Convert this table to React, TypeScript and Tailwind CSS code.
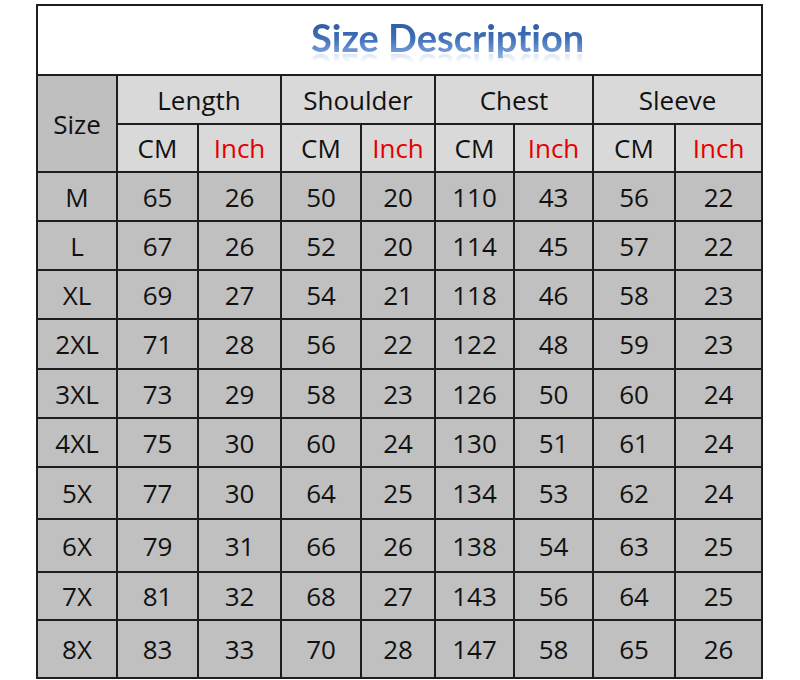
const rows: [string, number, number, number, number, number, number, number, number, string][] = [
  ['M', 65, 26, 50, 20, 110, 43, 56, 22, 'h-[49px]'],
  ['L', 67, 26, 52, 20, 114, 45, 57, 22, 'h-[49px]'],
  ['XL', 69, 27, 54, 21, 118, 46, 58, 23, 'h-[49px]'],
  ['2XL', 71, 28, 56, 22, 122, 48, 59, 23, 'h-[50px]'],
  ['3XL', 73, 29, 58, 23, 126, 50, 60, 24, 'h-[49px]'],
  ['4XL', 75, 30, 60, 24, 130, 51, 61, 24, 'h-[49px]'],
  ['5X', 77, 30, 64, 25, 134, 53, 62, 24, 'h-[52px]'],
  ['6X', 79, 31, 66, 26, 138, 54, 63, 25, 'h-[53px]'],
  ['7X', 81, 32, 68, 27, 143, 56, 64, 25, 'h-[48px]'],
  ['8X', 83, 33, 70, 28, 147, 58, 65, 26, 'h-[58px]'],
]

const groups = ['Length', 'Shoulder', 'Chest', 'Sleeve']
const widths = [80, 81, 83, 80, 74, 79, 79, 82, 87]

const cell = 'border-2 border-[#1e1e1e] text-center align-middle p-0'

export default function App() {
  return (
    <div className="min-h-[680px] bg-white pt-[4px] pl-[36px] font-['Open_Sans',sans-serif] text-[#111]">
      <table className="w-[727px] table-fixed border-collapse border-2 border-[#1e1e1e] text-[26px] leading-none">
        <colgroup>
          {widths.map((w, i) => (
            <col key={i} style={{ width: w }} />
          ))}
        </colgroup>
        <tbody>
          <tr className="h-[70px] bg-white">
            <td colSpan={9} className={cell}>
              <div className="ml-[273px] w-fit pb-[4px] font-['Lato',sans-serif] text-[38px] font-bold leading-none [font-variant-ligatures:none]">
                <div className="bg-gradient-to-b from-[#2a55a3] via-[#3f6fb8] to-[#8db3e2] bg-clip-text pb-[3px] text-transparent [-webkit-box-reflect:below_-12px_linear-gradient(transparent_62%,rgba(0,0,0,0.45))]">
                  Size Description
                </div>
              </div>
            </td>
          </tr>
          <tr className="h-[49px]">
            <td rowSpan={2} className={`${cell} bg-[#bfbfbf]`}>
              Size
            </td>
            {groups.map((g) => (
              <td key={g} colSpan={2} className={`${cell} bg-[#d9d9d9]`}>
                {g}
              </td>
            ))}
          </tr>
          <tr className="h-[48px] bg-[#d9d9d9]">
            {groups.map((g) => [
              <td key={g + 'cm'} className={cell}>
                CM
              </td>,
              <td key={g + 'in'} className={`${cell} text-[#e60000]`}>
                Inch
              </td>,
            ])}
          </tr>
          {rows.map((r) => (
            <tr key={r[0]} className={`${r[9]} bg-[#c0c0c0]`}>
              {r.slice(0, 9).map((v, i) => (
                <td key={i} className={cell}>
                  {v}
                </td>
              ))}
            </tr>
          ))}
        </tbody>
      </table>
    </div>
  )
}
